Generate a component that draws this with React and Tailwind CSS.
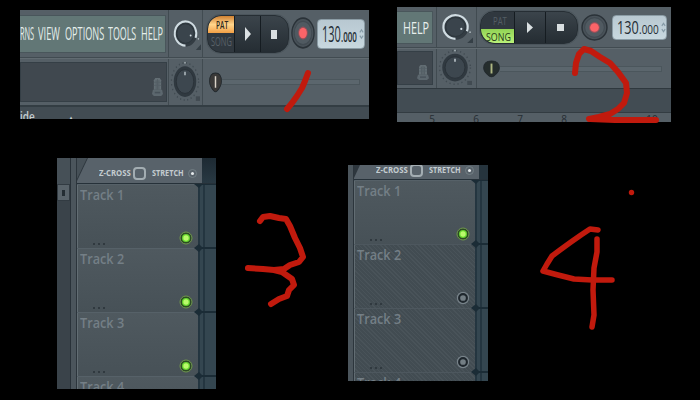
import { useLayoutEffect, useRef } from 'react';
import clsx from 'clsx';

// Condenses a line of text horizontally until it fills the given width.
function Fit({ w, className, children }) {
  const ref = useRef(null);
  useLayoutEffect(() => {
    const el = ref.current;
    el.style.transform = `scaleX(${w / el.offsetWidth})`;
  }, [w, children]);
  return (
    <span className={clsx('block shrink-0 whitespace-nowrap', className)} style={{ width: w }}>
      <span ref={ref} className="inline-block origin-left">{children}</span>
    </span>
  );
}

function Robot({ className }) {
  return (
    <svg viewBox="0 0 12 18" preserveAspectRatio="none" className={className}>
      <path d="M3.500 1h5l1.500 2v9H2V3z" fill="#636e74" />
      <path d="M4.500 3v9M6 2v10M7.500 3v9" stroke="#4d585f" strokeWidth=".7" />
      <path d="M2 5h8M2 8h8" stroke="#545f66" strokeWidth=".8" />
      <path d="M1 12h10l1 4-2 2H2l-2-2z" fill="#5c676e" />
      <path d="M3 14h6v1.500H3z" fill="#475159" />
    </svg>
  );
}

function VolumeKnob({ className }) {
  return (
    <svg viewBox="0 0 36 36" preserveAspectRatio="none" className={className}>
      <circle cx="18" cy="18" r="13.5" fill="#333c43" />
      <path d="M18 30.5A12.5 12.5 0 1 1 29.7 22.5" fill="none" stroke="#d0dce2" strokeWidth="2.3" />
      <circle cx="18" cy="18" r="10" fill="#3a444c" stroke="#2b343b" />
      <circle cx="24" cy="20" r="1.1" fill="#d5e0e5" />
      <circle cx="33" cy="23.5" r=".9" fill="#aab5ba" />
      <path d="M36 29v6h-6z" fill="#353f46" />
    </svg>
  );
}

function PitchKnob({ className }) {
  return (
    <svg viewBox="0 0 36 36" preserveAspectRatio="none" className={className}>
      <circle cx="18" cy="18" r="16.3" fill="none" stroke="#414b52" strokeWidth="1.5" strokeDasharray="1.3 3" />
      <circle cx="18" cy="18" r="13.5" fill="#303940" />
      <circle cx="18" cy="18" r="10.5" fill="#3d474f" stroke="#272f36" strokeWidth=".8" />
      <path d="M18 9.500v3" stroke="#c2ccd1" strokeWidth="1.6" />
      <circle cx="18" cy="1.5" r=".9" fill="#aab5ba" />
      <path d="M31 31h5v4h-5z" fill="#414a51" />
    </svg>
  );
}

function ModeSwitch({ song }) {
  return (
    <div className={clsx('flex shrink-0 flex-col overflow-hidden bg-[#30383f]', song ? 'w-[33px] rounded-l-[14px]' : 'w-[26px] rounded-l-[13px]')}>
      <div className={clsx('flex items-center justify-center leading-none', song ? 'h-[17px] pl-1 text-[10px] text-[#545e65]' : 'h-[17px] bg-gradient-to-b from-[#cf8130] via-[#ffd58b] to-[#f3a044] pl-[2px] text-[10px] font-semibold text-[#30291c]')}>
        <Fit w={song ? 14 : 12}>PAT</Fit>
      </div>
      <div className={clsx('flex items-center justify-center leading-none', song ? 'h-[14px] bg-gradient-to-b from-[#91d354] to-[#baf179] pl-px text-[11px] font-medium text-[#243a18]' : 'h-[18px] text-[12px] text-[#596168]')}>
        <Fit w={song ? 25 : 21}>SONG</Fit>
      </div>
    </div>
  );
}

function Transport({ song, className }) {
  return (
    <div className={clsx('flex shrink-0 overflow-hidden border border-[#262e34] bg-gradient-to-b from-[#3b444b] to-[#252d33] shadow-[0_0_0_1px_#4b555c]', className)}>
      <ModeSwitch song={song} />
      <div className="flex flex-1 items-center justify-center border-x border-[#151c21]">
        <svg viewBox="0 0 6 12" preserveAspectRatio="none" className={song ? 'h-[11px] w-[6px]' : 'h-[14px] w-[6px]'}>
          <path d="M0 0L6 6 0 12z" fill="#dbe1e3" />
        </svg>
      </div>
      <div className="flex flex-1 items-center justify-center pr-0.5">
        <div className={clsx('bg-[#d9dfe1]', song ? 'h-[7px] w-[7px]' : 'h-[9px] w-[6px]')} />
      </div>
    </div>
  );
}

function Record({ className }) {
  return (
    <svg viewBox="0 0 26 26" preserveAspectRatio="none" className={className}>
      <circle cx="13" cy="13" r="12" fill="#495259" stroke="#2a3238" strokeWidth="1.4" />
      <circle cx="13" cy="13" r="9.5" fill="#505a61" stroke="#414a51" />
      <circle cx="13" cy="13" r="5.2" fill="#94505a" />
      <circle cx="13" cy="13" r="4.2" fill="#fb6468" />
    </svg>
  );
}

function Tempo({ song, className }) {
  return (
    <div className={clsx('flex shrink-0 rounded-[4px] border border-[#8b9ca5] bg-gradient-to-b from-[#b8c8d1] to-[#c8d8df] text-[#242d34]', className)}>
      <Fit w={song ? 22 : 19} className={song ? 'text-[19px] leading-[23px] font-medium' : 'text-[22px] leading-[27px] font-medium'}>130</Fit>
      <Fit w={song ? 20 : 16} className={song ? 'text-[13px] leading-[27px] font-medium' : 'text-[15px] leading-[32px] font-semibold'}>.000</Fit>
      <svg viewBox="0 0 6 12" className="ml-auto h-full w-[5px] shrink-0">
        <path d="M1 4l2-3 2 3M1 8l2 3 2-3" fill="none" stroke="#8499a5" strokeWidth="1.3" />
      </svg>
    </div>
  );
}

function Slider({ song }) {
  return (
    <div className="flex h-full flex-1 items-center">
      <svg viewBox="0 0 16 20" preserveAspectRatio="none" className={song ? 'ml-[6px] h-[18px] w-[17px] shrink-0' : 'ml-[6px] h-[21px] w-[13px] shrink-0'}>
        <path d="M8 1C3 1 .7 4 .7 9c0 4 3 7 5.300 9q2 1.500 4 0c2.300-2 5.300-5 5.300-9C15.300 4 13 1 8 1z" fill={song ? '#252d2d' : '#3a3938'} stroke="#22292e" />
        <path d="M8 4v11" stroke={song ? '#aeb783' : '#d9d2c8'} strokeWidth="1.8" />
      </svg>
      <div className="mr-[9px] h-[6px] flex-1 border border-l-0 border-[#4b565c] bg-[#5b666d]" />
    </div>
  );
}

function ToolbarPat() {
  return (
    <section className="mt-[10px] ml-5 flex h-[109px] w-[349px] shrink-0 flex-col overflow-hidden bg-[#555f66]">
      <div className="flex h-[48px] shrink-0 border-b border-[#414b51]">
        <div className="flex w-[149px] shrink-0 border-r border-[#414b51] pt-[5px] pb-[5px]">
          <div className="flex h-[38px] w-[146px] items-center overflow-hidden border border-l-0 border-[#49565b] bg-[#627776] pb-[2px] text-[19px] leading-none font-medium text-[#e6efec]">
            <Fit w={14}>RNS</Fit>
            <Fit w={22} className="ml-[4px]">VIEW</Fit>
            <Fit w={39} className="ml-[5px]">OPTIONS</Fit>
            <Fit w={28} className="ml-[4px]">TOOLS</Fit>
            <Fit w={22} className="ml-[5px]">HELP</Fit>
          </div>
        </div>
        <div className="w-[34px] shrink-0 border-r border-[#414b51] pt-[6px] pl-px">
          <VolumeKnob className="h-[35px] w-[31px]" />
        </div>
        <div className="flex flex-1 items-start pt-[5px] pl-1">
          <Transport className="h-[38px] w-[82px] rounded-[14px]" />
          <Record className="mt-[2px] ml-[2px] h-[32px] w-[24px] shrink-0" />
          <Tempo className="mt-[4px] ml-[2px] h-[30px] w-[48px] pl-[4px]" />
        </div>
      </div>
      <div className="flex h-[47px] shrink-0 border-t border-[#616b71]">
        <div className="w-[149px] shrink-0 border-r border-[#414b51] pt-[3px]">
          <div className="flex h-[40px] w-[147px] items-center justify-end border border-[#353f46] bg-[#40484f] pr-[3px]">
            <Robot className="mt-2 h-[19px] w-[11px]" />
          </div>
        </div>
        <div className="w-[34px] shrink-0 border-r border-[#414b51] pt-[2px] pl-px">
          <PitchKnob className="h-[41px] w-[30px]" />
        </div>
        <Slider />
      </div>
      <div className="flex-1 overflow-hidden border-t-2 border-[#333d43] bg-[#424c53] text-[12px] font-semibold text-[#c5ced1]">
        <div className="flex gap-[34px] pt-[3px] leading-[14px]">
          <Fit w={15}>ide</Fit>
          <span className="pt-[3px] text-[8px] leading-[10px]">▴</span>
        </div>
      </div>
    </section>
  );
}

function ToolbarSong() {
  return (
    <section className="mt-[7px] ml-7 flex h-[115px] w-[274px] shrink-0 flex-col overflow-hidden bg-[#555f66]">
      <div className="flex h-[41px] shrink-0 border-b border-[#414b51]">
        <div className="w-10 shrink-0 border-r border-[#414b51] pt-[4px]">
          <div className="flex h-[33px] w-9 items-center border border-l-0 border-[#49565b] bg-[#627776] pb-px pl-[6px] text-[17px] leading-none font-medium text-[#e6efec]">
            <Fit w={26}>HELP</Fit>
          </div>
        </div>
        <div className="w-[40px] shrink-0 border-r border-[#414b51] pt-[3px] pl-px">
          <VolumeKnob className="h-[34px] w-[35px]" />
        </div>
        <div className="flex flex-1 items-start pt-[4px] pl-[3px]">
          <Transport song className="h-[33px] w-[98px] rounded-[14px]" />
          <Record className="mt-[3px] ml-[3px] h-[27px] w-[27px] shrink-0" />
          <Tempo song className="mt-[4px] ml-[4px] h-[25px] w-[55px] pl-[4px]" />
        </div>
      </div>
      <div className="flex h-10 shrink-0 border-t border-[#616b71]">
        <div className="w-10 shrink-0 border-r border-[#414b51] pt-[2px]">
          <div className="flex h-[34px] w-9 items-center justify-end border border-[#353f46] bg-[#40484f] pr-[3px]">
            <Robot className="mt-[8px] h-4 w-3" />
          </div>
        </div>
        <div className="w-[40px] shrink-0 border-r border-[#414b51] pl-px">
          <PitchKnob className="h-[37px] w-[34px]" />
        </div>
        <Slider song />
      </div>
      <div className="h-[25px] shrink-0 border-y border-t-[#2f383e] border-b-[#333c42] bg-[#424c53]" />
      <div className="flex h-[9px] shrink-0 overflow-hidden bg-[#555f66] pl-[13px] text-[10px] leading-[13px] font-medium text-[#252d33]">
        {[5, 6, 7, 8, 9, 10].map((bar) => (
          <span key={bar} className="w-11 shrink-0 text-center">{bar}</span>
        ))}
      </div>
    </section>
  );
}

function Led({ on }) {
  return (
    <svg viewBox="0 0 14 14" className="h-[14px] w-[14px]">
      {on ? (
        <>
          <circle cx="7" cy="7" r="6" fill="#2c4b24" stroke="#70964f" />
          <circle cx="7" cy="7" r="4" fill="#65d52c" />
          <circle cx="7" cy="7" r="2.700" fill="#b9fa6b" />
        </>
      ) : (
        <>
          <circle cx="7" cy="7" r="6.200" fill="#78838a" />
          <circle cx="7" cy="7" r="3.900" fill="#737e84" stroke="#1f272d" strokeWidth="2.100" />
        </>
      )}
    </svg>
  );
}

function Track({ n, on }) {
  return (
    <div className="flex h-16 shrink-0">
      <div
        className={clsx(
          'flex h-16 w-[121px] shrink-0 flex-col justify-between rounded-r-[4px] border-t border-l border-l-[#626d73] pl-[2px]',
          on
            ? 'border-t-[#566168] bg-gradient-to-b from-[#4f595f] to-[#475157]'
            : 'border-t-[#4d575e] bg-[#424c52] bg-[repeating-linear-gradient(45deg,#424c52_0px,#424c52_2px,#495359_2px,#495359_3px)]',
        )}
      >
        <Fit w={44} className="text-[15px] leading-[18px] font-semibold text-[#747f86]">Track {n}</Fit>
        <div className="flex items-end justify-between pr-[5px] pb-[2px]">
          <div className="mb-px ml-[13px] flex gap-[3px]">
            <i className="h-[2px] w-[2px] bg-[#30393f]" />
            <i className="h-[2px] w-[2px] bg-[#30393f]" />
            <i className="h-[2px] w-[2px] bg-[#30393f]" />
          </div>
          <div className="mb-[1px]"><Led on={on} /></div>
        </div>
      </div>
      <svg viewBox="0 0 24 64" className="-ml-[5px] h-16 w-[24px] shrink-0" preserveAspectRatio="none">
        <path d="M6 0v64M11 0v64" stroke="#1f303a" strokeWidth="1.4" fill="none" />
        <path d="M4 0h20M4 64h20" stroke="#1b2c36" strokeWidth="2" />
        <path d="M1 0h5v4zM1 64h5v-4zM6 0h4L6 4zM6 64h4l-4-4z" fill="#1b2c36" />
      </svg>
    </div>
  );
}

function HeaderOptions({ className }) {
  return (
    <div className={clsx('flex items-center text-[8px] leading-none font-bold text-[#c4ccd0]', className)}>
      <Fit w={32}>Z-CROSS</Fit>
      <div className="ml-[2px] h-[13px] w-[13px] shrink-0 rounded-[4px] border-2 border-[#a3adb2]" />
      <Fit w={32} className="ml-[6px]">STRETCH</Fit>
      <div className="ml-[4px] flex h-[9px] w-[9px] shrink-0 items-center justify-center rounded-full border border-[#737e84]">
        <div className="h-[3px] w-[3px] rounded-full bg-[#e5eaec]" />
      </div>
    </div>
  );
}

function PlaylistAllOn() {
  return (
    <section className="ml-[57px] flex h-[231px] w-[159px] shrink-0 overflow-hidden bg-[#4b555c]">
      <div className="flex w-[13px] shrink-0 flex-col bg-[#3a434a]">
        <div className="h-[26px] bg-[#465057]" />
        <div className="flex h-[17px] items-center justify-center border border-[#323b42] bg-[#59636a]">
          <div className="h-[6px] w-[3px] bg-[#242d33]" />
        </div>
      </div>
      <div className="w-[7px] shrink-0 border-x border-l-[#293239] border-r-[#2c353c] bg-[#4b555c]" />
      <div className="flex w-[139px] shrink-0 flex-col bg-[#344650]">
        <div className="flex h-[26px] shrink-0 border-b border-[#263139]">
          <div className="w-[125px] bg-[#2e373e]">
            <div className="h-full bg-[#465057] [clip-path:polygon(0_0,10px_0,0_21px)]" />
            <div className="-mt-[25px] h-[25px] bg-[#58626a] [clip-path:polygon(11px_0,100%_0,100%_100%,0_100%,0_23px)]">
              <HeaderOptions className="h-[30px] pl-[22px]" />
            </div>
          </div>
          <div className="flex-1 bg-gradient-to-b from-[#1d2a33] to-[#293943]" />
        </div>
        <Track n={1} on />
        <Track n={2} on />
        <Track n={3} on />
        <Track n={4} on />
      </div>
    </section>
  );
}

function PlaylistMuted() {
  return (
    <section className="mt-[7px] ml-[132px] flex h-[216px] w-[140px] shrink-0 overflow-hidden bg-[#4b555c]">
      <div className="w-[6px] shrink-0 border-r border-[#2c353c] bg-[#4b555c]" />
      <div className="flex w-[134px] shrink-0 flex-col bg-[#344650]">
        <div className="flex h-[15px] shrink-0 border-b border-[#263139]">
          <div className="w-[125px] bg-[#2e373e]">
            <div className="h-full bg-[#58626a] [clip-path:polygon(6px_0,100%_0,100%_100%,0_100%,0_13px)]">
              <HeaderOptions className="h-[10px] pl-[22px]" />
            </div>
          </div>
          <div className="flex-1 bg-[#26343d]" />
        </div>
        <Track n={1} on />
        <Track n={2} />
        <Track n={3} />
        <Track n={4} />
      </div>
    </section>
  );
}

// Freehand numbering drawn over the panels.
function Annotations() {
  return (
    <svg viewBox="0 0 700 400" className="pointer-events-none absolute inset-0 h-full w-full" fill="none" stroke="#c11a0d" strokeWidth="6" strokeLinecap="round" strokeLinejoin="round">
      <path d="M308 73L305 81 302 88 297 96 292 103 287 109" />
      <path d="M575 73L576 63 579 54 584 49 591 51 600 57 610 63 618 72 626 83 627 93 624 103 618 109 610 114 599 117 589 119M590 119L615 120 656 120" />
      <path d="M260 221L263 217 270 216 279 218 286 219 290 226 295 238 300 248 303 257 299 262 290 265 284 269 274 270 263 269 248 268M274 270L282 272 292 279 294 285 289 290 287 296 279 299 271 304" />
      <path d="M598 230L590 229 581 235 571 242 560 250 552 256 547 264 543 271 558 275 574 279 592 280 612 280M597 239L597 252 594 268 593 290 594 315 592 327" strokeWidth="5.500" />
      <circle cx="631.500" cy="192.500" r="2.700" fill="#c11a0d" stroke="none" />
    </svg>
  );
}

export default function App() {
  return (
    <main className="relative h-[400px] w-[700px] overflow-hidden bg-black font-['Open_Sans','Noto_Sans',sans-serif]">
      <div className="flex h-[158px] items-start">
        <ToolbarPat />
        <ToolbarSong />
      </div>
      <div className="flex items-start">
        <PlaylistAllOn />
        <PlaylistMuted />
      </div>
      <Annotations />
    </main>
  );
}
